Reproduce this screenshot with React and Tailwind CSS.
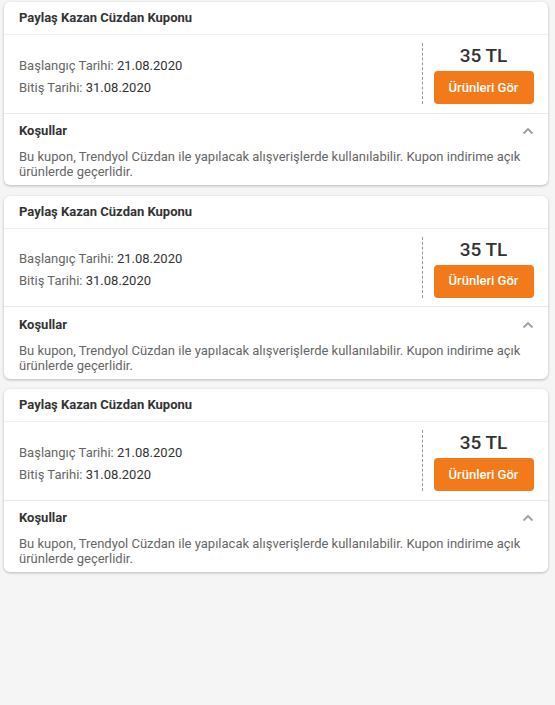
import React from 'react';

const coupons = [1, 2, 3];

function ChevronUp() {
  return (
    <svg width="12" height="8" viewBox="0 0 12 8" fill="none">
      <path d="M1.5 6.5 L6 2 L10.5 6.5" stroke="#9e9e9e" strokeWidth="1.8" />
    </svg>
  );
}

function CouponCard() {
  return (
    <div className="bg-white rounded-[6px] shadow-[0_1px_3px_rgba(0,0,0,0.25)] ml-[4px] mr-[7px]">
      {/* Header */}
      <div className="h-[33px] flex items-center px-[15px] border-b border-[#f0f0f0]">
        <span className="text-[13px] font-bold text-[#333]">Paylaş Kazan Cüzdan Kuponu</span>
      </div>

      {/* Body */}
      <div className="flex pt-[8px] pb-[8.5px] border-b border-[#e8e8e8]">
        <div className="flex-1 flex flex-col justify-center pl-[15px] pt-[6px] gap-[6px] text-[13px] leading-[16px] text-[#666]">
          <div>Başlangıç Tarihi: <span className="text-[#333]">21.08.2020</span></div>
          <div>Bitiş Tarihi: <span className="text-[#333]">31.08.2020</span></div>
        </div>
        <div className="w-[126px] border-l border-dashed border-[#999] flex flex-col items-center pl-[11px] pr-[15px]">
          <div className="text-[19px] font-medium text-[#333] leading-[28px] mt-[-1px]">35 TL</div>
          <button className="mt-[1px] w-[100px] h-[33px] rounded-[4px] bg-[#f27a1a] text-white text-[13px] font-medium">
            Ürünleri Gör
          </button>
        </div>
      </div>

      {/* Conditions */}
      <div className="px-[15px] pt-[7.5px] pb-[6px]">
        <div className="flex items-center justify-between h-[20px]">
          <span className="text-[13px] font-bold text-[#333]">Koşullar</span>
          <span className="mr-[-1px]"><ChevronUp /></span>
        </div>
        <p className="mt-[8px] text-[13px] leading-[15px] text-[#666] pr-[10px]">
          Bu kupon, Trendyol Cüzdan ile yapılacak alışverişlerde kullanılabilir. Kupon indirime açık ürünlerde geçerlidir.
        </p>
      </div>
    </div>
  );
}

export default function App() {
  return (
    <div className="min-h-[705px] bg-[#f5f5f5] pt-[2px] flex flex-col gap-[10.5px]" style={{ fontFamily: 'Roboto, sans-serif' }}>
      {coupons.map((c) => (
        <CouponCard key={c} />
      ))}
    </div>
  );
}
